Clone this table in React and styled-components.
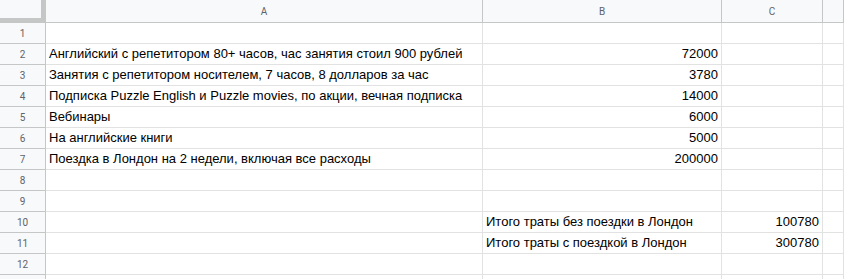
import React from "react";
import styled, { createGlobalStyle } from "styled-components";

const Global = createGlobalStyle`
  html, body { margin: 0; padding: 0; background: #fff; }
  body { overflow: hidden; }
`;

const Sheet = styled.div`
  display: grid;
  grid-template-columns: 46px 437px 239px 101px 1fr;
  grid-template-rows: 23px repeat(13, 21px);
  width: 844px;
  height: 279px;
  overflow: hidden;
  font-family: "Liberation Sans", Arial, sans-serif;
`;

const Corner = styled.div`
  box-sizing: border-box;
  background: #f8f9fa;
  border-right: 5px solid #c4c7c5;
  border-bottom: 5px solid #c4c7c5;
`;

const ColHead = styled.div`
  box-sizing: border-box;
  background: #f8f9fa;
  border-right: 1px solid #c4c7c5;
  border-bottom: 1px solid #c4c7c5;
  display: flex;
  align-items: center;
  justify-content: center;
  font-family: Roboto, "Liberation Sans", sans-serif;
  font-size: 10px;
  color: #5f6368;
  padding-top: 1px;
`;

const RowHead = styled.div`
  box-sizing: border-box;
  background: #f8f9fa;
  border-right: 1px solid #c4c7c5;
  border-bottom: 1px solid #c4c7c5;
  display: flex;
  align-items: center;
  justify-content: center;
  font-family: Roboto, "Liberation Sans", sans-serif;
  font-size: 10px;
  color: #5f6368;
`;

const Cell = styled.div`
  box-sizing: border-box;
  border-right: 1px solid #e2e2e3;
  border-bottom: 1px solid #e2e2e3;
  display: flex;
  align-items: flex-end;
  justify-content: ${(p) => (p.$num ? "flex-end" : "flex-start")};
  padding: 0 3px 2px 3px;
  font-size: 13px;
  line-height: 16px;
  color: #000;
  white-space: nowrap;
  overflow: hidden;
`;

const rows = [
  ["", "", ""],
  ["Английский с репетитором 80+ часов, час занятия стоил 900 рублей", "72000", ""],
  ["Занятия с репетитором носителем, 7 часов, 8 долларов за час", "3780", ""],
  ["Подписка Puzzle English и Puzzle movies, по акции, вечная подписка", "14000", ""],
  ["Вебинары", "6000", ""],
  ["На английские книги", "5000", ""],
  ["Поездка в Лондон на 2 недели, включая все расходы", "200000", ""],
  ["", "", ""],
  ["", "", ""],
  ["", "Итого траты без поездки в Лондон", "100780"],
  ["", "Итого траты с поездкой в Лондон", "300780"],
  ["", "", ""],
  ["", "", ""],
];

const isNum = (v) => /^\d+$/.test(v);

export default function App() {
  return (
    <>
      <Global />
      <Sheet>
        <Corner />
        <ColHead>A</ColHead>
        <ColHead>B</ColHead>
        <ColHead>C</ColHead>
        <ColHead />
        {rows.map((r, i) => (
          <React.Fragment key={i}>
            <RowHead>{i < 12 ? i + 1 : ""}</RowHead>
            {r.map((v, j) => (
              <Cell key={j} $num={isNum(v)}>
                {v}
              </Cell>
            ))}
            <Cell />
          </React.Fragment>
        ))}
      </Sheet>
    </>
  );
}
